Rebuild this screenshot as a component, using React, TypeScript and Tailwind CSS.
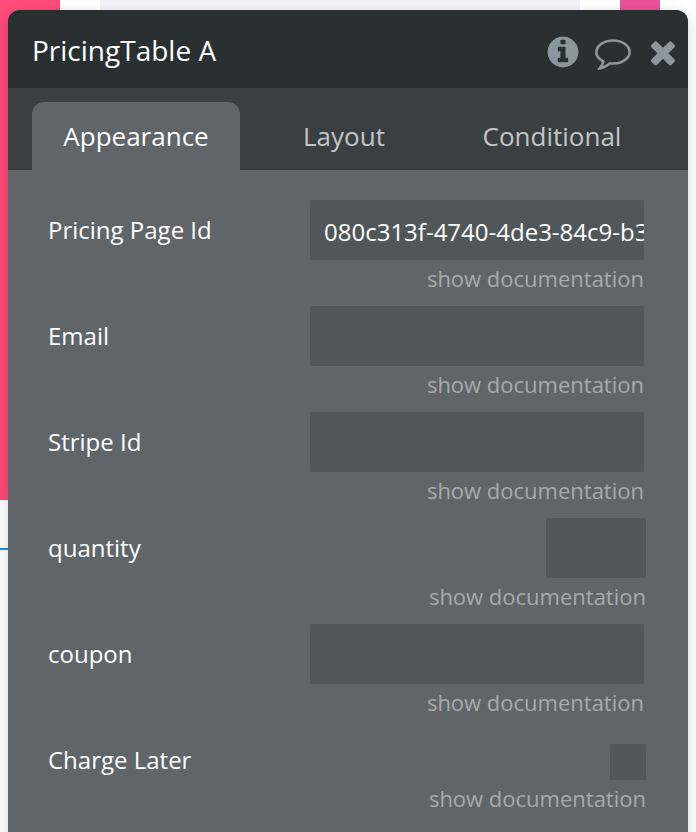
import type { ReactNode } from "react";

const ICONS = {
  info: "M1152 1376v-160q0-14-9-23t-23-9h-96v-512q0-14-9-23t-23-9h-320q-14 0-23 9t-9 23v160q0 14 9 23t23 9h96v320h-96q-14 0-23 9t-9 23v160q0 14 9 23t23 9h448q14 0 23-9t9-23zm-128-896v-160q0-14-9-23t-23-9h-192q-14 0-23 9t-9 23v160q0 14 9 23t23 9h192q14 0 23-9t9-23zm640 416q0 209-103 385.5t-279.5 279.5-385.5 103-385.5-103-279.5-279.5-103-385.5 103-385.5 279.5-279.5 385.5-103 385.5 103 279.5 279.5 103 385.5z",
  comment:
    "M896 384q-204 0-381.5 69.5t-282 187.5-104.5 255q0 112 71.5 213.5t201.5 175.5l87 50-27 96q-24 91-70 172 152-63 275-171l43-38 57 6q69 8 130 8 204 0 381.5-69.5t282-187.5 104.5-255-104.5-255-282-187.5-381.5-69.5zm896 512q0 174-120 321.5t-326 233-450 85.5q-70 0-145-8-198 175-460 242-49 14-114 22h-5q-15 0-27-10.5t-16-27.5v-1q-3-4-.5-12t2-10 4.5-9.5l6-9 7-8.5 8-9q7-8 31-34.5t34.5-38 31-39.5 32.5-51 27-59 26-76q-157-89-247.5-220t-90.5-281q0-130 71-248.5t191-204.5 286-136.5 348-50.5 348 50.5 286 136.5 191 204.5 71 248.5z",
  close:
    "M1490 1322q0 40-28 68l-136 136q-28 28-68 28t-68-28l-294-294-294 294q-28 28-68 28t-68-28l-136-136q-28-28-28-68t28-68l294-294-294-294q-28-28-28-68t28-68l136-136q28-28 68-28t68 28l294 294 294-294q28-28 68-28t68 28l136 136q28 28 28 68t-28 68l-294 294 294 294q28 28 28 68z",
};

function Icon({ name }: { name: keyof typeof ICONS }) {
  return (
    <svg viewBox="0 0 1792 1792" className="size-9 fill-[#8b979c]" aria-hidden="true">
      <path d={ICONS[name]} />
    </svg>
  );
}

function Field({ label, wide = false, children }: { label: string; wide?: boolean; children: ReactNode }) {
  return (
    <div className={`flex items-start justify-between pl-10 ${wide ? "pr-[42px]" : "pr-11"}`}>
      <div className="h-[60px] text-2xl leading-[60px] text-white">{label}</div>
      <div className="flex flex-col items-end">
        {children}
        <div className="h-[46px] text-[22px] leading-9 text-[#a8aaaa]">show documentation</div>
      </div>
    </div>
  );
}

function TextInput({ value = "" }: { value?: string }) {
  return (
    <div className="h-[60px] w-[334px] overflow-hidden rounded-xs bg-[#515759] pl-3.5 text-2xl leading-[64px] whitespace-nowrap text-white">
      {value}
    </div>
  );
}

export default function App() {
  return (
    <div className="relative h-[832px] w-[696px] overflow-hidden bg-white font-['Open_Sans','Noto_Sans',sans-serif]">
      {/* Canvas elements behind the property editor */}
      <div className="absolute top-0 left-0 h-[500px] w-[60px] bg-[#ff4b79]" />
      <div className="absolute top-0 left-[100px] h-10 w-[480px] bg-[#f3f2f8]" />
      <div className="absolute top-0 left-[620px] h-10 w-10 bg-[#ea5298]" />
      <div className="absolute top-[548px] left-0 h-0.5 w-10 bg-[#1a8ceb]" />

      <div className="absolute top-2.5 left-2 h-[860px] w-[680px] overflow-hidden rounded-t-xl bg-[#5f6568] shadow-[0_4px_14px_rgba(0,0,0,0.18)]">
        <header className="flex h-[78px] items-start justify-between bg-[#293032] pl-6">
          <h1 className="text-[28px] leading-[80px] text-white">PricingTable A</h1>
          <div className="flex gap-3.5 pt-6 pr-[7px]">
            <Icon name="info" />
            <Icon name="comment" />
            <Icon name="close" />
          </div>
        </header>

        <nav className="flex h-[82px] items-end bg-[#3a3f41] pl-6 text-center text-[26px] leading-[68px] text-[#c3c6c6]">
          <div className="h-[68px] w-52 rounded-t-xl bg-[#5f6568] text-white">Appearance</div>
          <div className="h-[68px] w-52">Layout</div>
          <div className="h-[68px] w-52">Conditional</div>
        </nav>

        <main className="pt-[30px]">
          <Field label="Pricing Page Id">
            <TextInput value="080c313f-4740-4de3-84c9-b3" />
          </Field>
          <Field label="Email">
            <TextInput />
          </Field>
          <Field label="Stripe Id">
            <TextInput />
          </Field>
          <Field label="quantity" wide>
            <div className="h-[60px] w-[100px] rounded-xs bg-[#515759]" />
          </Field>
          <Field label="coupon">
            <TextInput />
          </Field>
          <Field label="Charge Later" wide>
            <div className="mt-3.5 size-9 rounded-xs bg-[#515759]" />
          </Field>
        </main>
      </div>
    </div>
  );
}
